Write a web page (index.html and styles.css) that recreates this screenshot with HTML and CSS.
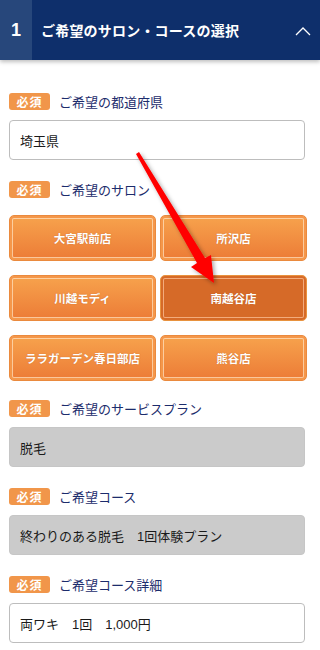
FILE: index.html
```html
<!DOCTYPE html>
<html lang="ja">
<head>
    <meta charset="UTF-8">
    <meta name="viewport" content="width=device-width, initial-scale=1.0">
    <title>ご希望のサロン・コースの選択</title>
    <link rel="stylesheet" href="styles.css">
</head>
<body>
    <div class="step-header">
        <div class="step-num">1</div>
        <div class="step-title">ご希望のサロン・コースの選択</div>
        <svg class="step-toggle" width="16" height="10" viewBox="0 0 16 10">
            <polyline points="1,9 8,2 15,9" fill="none" stroke="#fff" stroke-width="1.3"/>
        </svg>
    </div>

    <div class="form-body">
        <div class="field">
            <div class="field-label"><span class="req">必須</span>ご希望の都道府県</div>
            <div class="box">埼玉県</div>
        </div>

        <div class="field field-salon">
            <div class="field-label"><span class="req">必須</span>ご希望のサロン</div>
            <div class="salon-grid">
                <button class="salon-btn">大宮駅前店</button>
                <button class="salon-btn">所沢店</button>
                <button class="salon-btn">川越モディ</button>
                <button class="salon-btn selected">南越谷店</button>
                <button class="salon-btn">ララガーデン春日部店</button>
                <button class="salon-btn">熊谷店</button>
            </div>
        </div>

        <div class="field">
            <div class="field-label"><span class="req">必須</span>ご希望のサービスプラン</div>
            <div class="box disabled">脱毛</div>
        </div>

        <div class="field">
            <div class="field-label"><span class="req">必須</span>ご希望コース</div>
            <div class="box disabled">終わりのある脱毛　1回体験プラン</div>
        </div>

        <div class="field">
            <div class="field-label"><span class="req">必須</span>ご希望コース詳細</div>
            <div class="box">両ワキ　1回　1,000円</div>
        </div>
    </div>

    <!-- annotation arrow -->
    <svg class="pointer" width="320" height="650" viewBox="0 0 320 650">
        <defs>
            <filter id="sh" x="-20%" y="-20%" width="140%" height="140%">
                <feDropShadow dx="2" dy="2" stdDeviation="2" flood-color="#000" flood-opacity="0.35"/>
            </filter>
        </defs>
        <polygon filter="url(#sh)" fill="#ff0000"
            points="136,154 139,152 205,258 211,255 214,283 191,267 197,263"/>
    </svg>
</body>
</html>
```

FILE: styles.css
```css
body {
    margin: 0;
    padding: 0;
    background: #fff;
    font-family: "Liberation Sans", "Noto Sans CJK JP", sans-serif;
    color: #222;
    width: 320px;
    position: relative;
}
.step-header {
    display: flex;
    align-items: center;
    height: 60px;
    background-color: #0e2f6b;
    color: #fff;
    box-shadow: 0 2px 4px rgba(0, 0, 0, 0.25);
    position: relative;
}
.step-num {
    width: 32px;
    height: 60px;
    background-color: #27477b;
    display: flex;
    align-items: center;
    justify-content: center;
    font-size: 18px;
    font-weight: bold;
}
.step-title {
    flex: 1;
    margin-left: 9px;
    font-size: 14px;
    font-weight: bold;
    letter-spacing: 0.2px;
}
.step-toggle {
    margin-right: 9px;
    margin-top: 2px;
}
.form-body {
    padding: 32px 15px 0 9px;
}
.field {
    margin-bottom: 20px;
}
.field-label {
    display: flex;
    align-items: center;
    height: 18px;
    margin-bottom: 10px;
    font-size: 13px;
    color: #1c2c6c;
}
.req {
    display: inline-flex;
    align-items: center;
    justify-content: center;
    width: 41px;
    height: 17px;
    margin-right: 9px;
    background-color: #f1964a;
    border-radius: 3px;
    color: #fff;
    font-size: 12px;
    font-weight: bold;
    letter-spacing: 1px;
}
.box {
    height: 38px;
    border: 1px solid #bdbdbd;
    border-radius: 4px;
    display: flex;
    align-items: center;
    padding-left: 10px;
    font-size: 13px;
    color: #1a1a1a;
}
.box.disabled {
    background-color: #cbcbcb;
    border-color: #c6c6c6;
}
.field-salon .field-label {
    margin-bottom: 17px;
}
.field-salon {
    margin-bottom: 18px;
}
.salon-grid {
    display: grid;
    grid-template-columns: 1fr 1fr;
    column-gap: 4px;
    row-gap: 14px;
    margin-right: -2px;
}
.salon-btn {
    height: 46px;
    border: 1px solid #ea8a3e;
    border-radius: 5px;
    background: linear-gradient(#f7a34d, #ec7b36);
    box-shadow: inset 0 0 0 2px #f5974a, inset 0 0 0 3px rgba(255, 224, 190, 0.75);
    color: #fff;
    font-family: "Liberation Sans", "Noto Sans CJK JP", sans-serif;
    font-size: 11.5px;
    font-weight: bold;
    text-shadow: 0 0 1px rgba(150, 70, 20, 0.5);
    padding: 0;
    cursor: pointer;
}
.salon-btn.selected {
    background: #d66a28;
    box-shadow: inset 0 0 0 2px #d66a28, inset 0 0 0 3px rgba(255, 200, 160, 0.7);
    border-color: #e8923e;
}
.pointer {
    position: absolute;
    top: 0;
    left: 0;
    pointer-events: none;
}
```
